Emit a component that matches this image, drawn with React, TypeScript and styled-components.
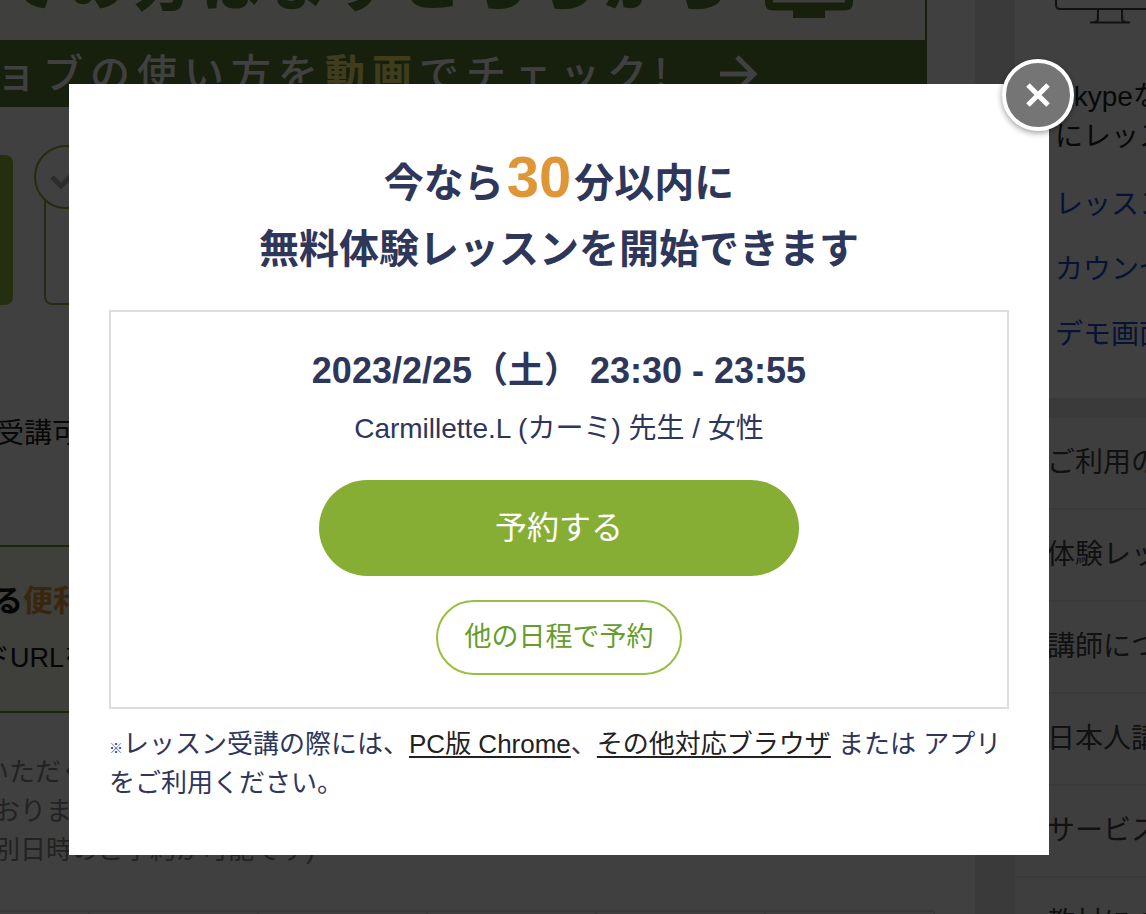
import React from "react";
import styled, { createGlobalStyle } from "styled-components";

const GlobalStyle = createGlobalStyle`
  * { box-sizing: border-box; }
  body {
    margin: 0;
    background: #e6e6e6;
    color: #222;
    font-family: "Liberation Sans", "Noto Sans CJK JP", sans-serif;
    font-size: 28px;
  }
  h1, h2, p, ul { margin: 0; padding: 0; }
`;

const Page = styled.div`
  display: flex;
  height: 100vh;
  overflow: hidden;
  white-space: nowrap;
`;

const Main = styled.main`
  flex: 1;
  min-width: 0;
  margin-right: 40px;
  overflow: hidden;
  background: #fff;
`;

const Banner = styled.div`
  height: 107px;
  margin-right: 48px;
  overflow: hidden;
  border-right: 2px solid #5a8030;
  background: #fcfcf6;
  font-family: "Noto Sans CJK JP", sans-serif;
`;

const BannerTop = styled.div`
  display: flex;
  align-items: flex-end;
  gap: 28px;
  height: 40px;
  padding-bottom: 22px;
  color: #5a8030;
`;

const BannerLead = styled.p`
  height: 18px;
  display: flex;
  align-items: flex-end;
  font-size: 60px;
  font-weight: 900;
  line-height: 78px;
  letter-spacing: 7px;
`;

const BannerLink = styled.a`
  display: flex;
  align-items: center;
  gap: 44px;
  height: 67px;
  padding-left: 3px;
  margin-left: -7px;
  background: #5a8030;
  color: #fff;
  font-size: 40px;
  font-weight: 500;
  letter-spacing: 7px;
  text-decoration: none;
`;

const BannerLabel = styled.span`
  padding-bottom: 6px;
`;

const Highlight = styled.em`
  color: #fff478;
  font-style: normal;
  font-weight: 700;
`;

const Steps = styled.div`
  display: flex;
  gap: 31px;
  margin-top: 48px;
`;

const CurrentStep = styled.div`
  width: 13px;
  height: 150px;
  border-radius: 0 8px 8px 0;
  background: #92b63c;
`;

const NextStep = styled.div`
  position: relative;
  width: 240px;
  height: 150px;
  border: 2px solid #8ab030;
  border-radius: 8px;
`;

const StepMark = styled.div`
  position: absolute;
  top: -12px;
  left: -12px;
  display: flex;
  align-items: center;
  justify-content: center;
  width: 64px;
  height: 64px;
  border: 2px solid #8ab030;
  border-radius: 50%;
  background: #fff;
`;

const Available = styled.p`
  margin: 108px 0 0 -4px;
  line-height: 42px;
`;

const Notice = styled.section`
  height: 168px;
  margin: 90px 48px 0 0;
  padding-top: 32px;
  border: solid #6a9a20;
  border-width: 2px 0;
  background: #fafaf0;
  color: #111;
`;

const NoticeTitle = styled.h2`
  margin-left: -7px;
  font-size: 30px;
  line-height: 44px;

  span { color: #e09636; }
`;

const NoticeText = styled.p`
  margin: 14px 0 0 -17px;
  font-size: 27px;
  line-height: 42px;
`;

const Remarks = styled.div`
  margin: 40px 0 0 -6px;
  color: #888;
  font-size: 26px;
  line-height: 39px;
`;

const RemarkOpening = styled.p`
  margin-left: -11px;
`;

const Schedule = styled.div`
  display: flex;
  justify-content: flex-end;
  height: 60px;
  margin: 40px 40px 0 0;
  border-top: 2px solid #e0e0e0;
  border-right: 2px solid #e0e0e0;
`;

const ScheduleCell = styled.div`
  flex: 0 0 169px;
  border-left: 2px solid #e0e0e0;
  background: #fbfafa;
`;

const Sidebar = styled.aside`
  flex: 0 0 131px;
  overflow: hidden;
`;

const Guide = styled.section`
  height: 398px;
  padding-left: 40px;
  background: #fff;
`;

const GuideIcon = styled.svg`
  display: block;
  width: 110px;
  height: 24px;
`;

const GuideText = styled.p`
  margin-top: 53px;
  padding-bottom: 3px;
  line-height: 40px;
`;

const GuideLink = styled.a`
  display: block;
  margin-top: 25px;
  color: #1a4ccc;
  line-height: 40px;
  text-decoration: none;
`;

const Menu = styled.ul`
  margin-top: 20px;
  list-style: none;
`;

const MenuLink = styled.a`
  display: block;
  height: 92px;
  padding-left: 32px;
  border-bottom: 2px solid #e6e6e6;
  background: #f8f8f8;
  color: #444;
  line-height: 90px;
  text-decoration: none;
`;

const Overlay = styled.div`
  position: fixed;
  inset: 0;
  display: flex;
  align-items: flex-start;
  justify-content: center;
  padding: 84px 28px 0 0;
  background: rgba(0, 0, 0, 0.75);
`;

const Dialog = styled.section`
  position: relative;
  width: 980px;
  max-width: 92%;
  padding: 66px 40px 52px;
  background: #fff;
  color: #2e365a;
  text-align: center;
`;

const CloseButton = styled.button`
  position: absolute;
  top: -25px;
  right: -25px;
  display: flex;
  align-items: center;
  justify-content: center;
  width: 72px;
  height: 72px;
  padding: 0;
  border: 4px solid #fff;
  border-radius: 50%;
  background: #757575;
  box-shadow: 0 2px 6px rgba(0, 0, 0, 0.4);
  cursor: pointer;
`;

const Title = styled.h1`
  font-size: 40px;
  font-weight: 700;
  line-height: 66px;
`;

const Minutes = styled.span`
  margin: 0 3px;
  color: #de9636;
  font-size: 58px;
  line-height: 40px;
`;

const Slot = styled.div`
  display: flex;
  flex-direction: column;
  align-items: center;
  margin-top: 28px;
  padding: 32px 20px;
  border: 2px solid #ddd;
`;

const SlotTime = styled.h2`
  font-size: 36px;
  line-height: 54px;
`;

const Teacher = styled.p`
  margin-top: 10px;
  font-size: 28px;
  line-height: 42px;
`;

const PillButton = styled.button<{ $primary?: boolean }>`
  width: ${(p) => (p.$primary ? "480px" : "246px")};
  max-width: 100%;
  height: ${(p) => (p.$primary ? "96px" : "75px")};
  margin-top: ${(p) => (p.$primary ? "30px" : "24px")};
  padding: 0 0 6px;
  border: ${(p) => (p.$primary ? "0" : "2px solid #98c040")};
  border-radius: 48px;
  background: ${(p) => (p.$primary ? "#86ae34" : "#fff")};
  color: ${(p) => (p.$primary ? "#fff" : "#669c2c")};
  font-family: inherit;
  font-size: ${(p) => (p.$primary ? "32px" : "27px")};
  cursor: pointer;
`;

const Footnote = styled.p`
  margin-top: 16px;
  font-size: 26px;
  line-height: 39px;
  text-align: left;

  small {
    font-family: "Noto Sans CJK JP", sans-serif;
    font-size: 14px;
    font-weight: 900;
    line-height: 16px;
  }
  a {
    color: #222;
    text-decoration-thickness: 2px;
    text-underline-offset: 3px;
  }
`;

const menuItems = [
  "ご利用の流れ",
  "体験レッスン",
  "講師について",
  "日本人講師",
  "サービス",
  "教材について",
];

export default function App() {
  return (
    <>
      <GlobalStyle />
      <Page>
        <Main>
          <Banner>
            <BannerTop>
              <BannerLead>ての方はまずこちらから</BannerLead>
              <svg width="88" height="36" viewBox="0 0 88 36" fill="none">
                <path d="M4 0v20.500q0 4 4 4h72q4 0 4-4V0" stroke="currentColor" strokeWidth="8" />
                <path d="M28 28h32v8H28z" fill="currentColor" />
              </svg>
            </BannerTop>
            <BannerLink href="#movie">
              <BannerLabel>
                ョブの使い方を<Highlight>動画</Highlight>でチェック!
              </BannerLabel>
              <svg width="40" height="40" viewBox="0 0 40 40" fill="none" stroke="currentColor" strokeWidth="5">
                <path d="M1 20h34M18 3l17 17-17 17" />
              </svg>
            </BannerLink>
          </Banner>
          <Steps>
            <CurrentStep />
            <NextStep>
              <StepMark>
                <svg width="32" height="24" viewBox="0 0 32 24" fill="none" stroke="#b0b0b0" strokeWidth="5">
                  <path d="M2 12l9 9L30 2" />
                </svg>
              </StepMark>
            </NextStep>
          </Steps>
          <Available>受講可能</Available>
          <Notice>
            <NoticeTitle>
              る<span>便利</span>
            </NoticeTitle>
            <NoticeText>ドURLを</NoticeText>
          </Notice>
          <Remarks>
            <RemarkOpening>いただく</RemarkOpening>
            <p>おります</p>
            <p>別日時のご予約が可能です)</p>
          </Remarks>
          <Schedule>
            {[0, 1, 2, 3, 4, 5].map((day) => (
              <ScheduleCell key={day} />
            ))}
          </Schedule>
        </Main>
        <Sidebar>
          <Guide>
            <GuideIcon viewBox="0 0 110 24" fill="none" stroke="#444" strokeWidth="2">
              <path d="M1 0v5q0 4 4 4h105" />
              <path d="M43 9v10q0 3-4 3M67 9v10q0 3 4 3" fill="#d8dede" />
              <path d="M35 22.500h40" />
            </GuideIcon>
            <GuideText>
              Skypeなし
              <br />
              にレッスン
            </GuideText>
            <GuideLink href="#lesson">レッスン</GuideLink>
            <GuideLink href="#counseling">カウンセリング</GuideLink>
            <GuideLink href="#demo">デモ画面</GuideLink>
          </Guide>
          <Menu>
            {menuItems.map((item) => (
              <li key={item}>
                <MenuLink href="#menu">{item}</MenuLink>
              </li>
            ))}
          </Menu>
        </Sidebar>
      </Page>
      <Overlay>
        <Dialog role="dialog" aria-modal="true" aria-labelledby="dialog-title">
          <CloseButton type="button" aria-label="閉じる">
            <svg width="26" height="26" viewBox="0 0 26 26" fill="none" stroke="#fff" strokeWidth="5">
              <path d="M3 3l20 20M23 3L3 23" />
            </svg>
          </CloseButton>
          <Title id="dialog-title">
            今なら<Minutes>30</Minutes>分以内に
            <br />
            無料体験レッスンを開始できます
          </Title>
          <Slot>
            <SlotTime>2023/2/25（土） 23:30 - 23:55</SlotTime>
            <Teacher>Carmillette.L (カーミ) 先生 / 女性</Teacher>
            <PillButton type="button" $primary>
              予約する
            </PillButton>
            <PillButton type="button">他の日程で予約</PillButton>
          </Slot>
          <Footnote>
            <small>※</small>レッスン受講の際には、<a href="#chrome">PC版 Chrome</a>、
            <a href="#browsers">その他対応ブラウザ</a> または アプリをご利用ください。
          </Footnote>
        </Dialog>
      </Overlay>
    </>
  );
}
